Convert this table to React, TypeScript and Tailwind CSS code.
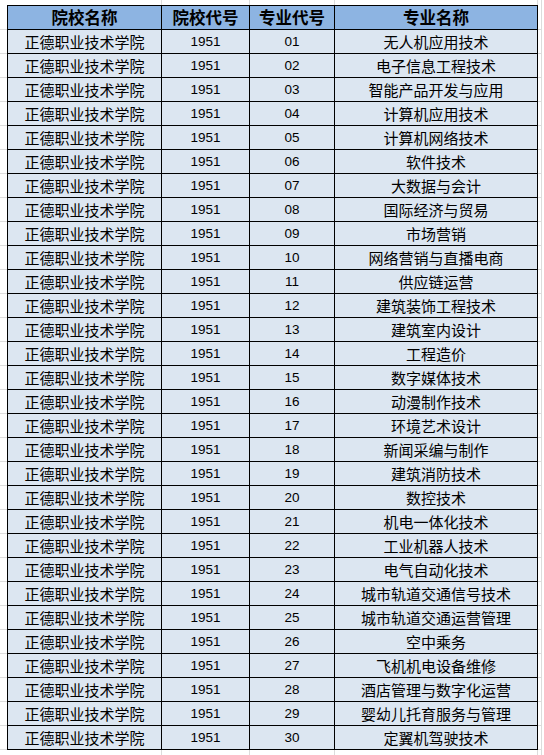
import React from "react";

const majors = [
  "无人机应用技术",
  "电子信息工程技术",
  "智能产品开发与应用",
  "计算机应用技术",
  "计算机网络技术",
  "软件技术",
  "大数据与会计",
  "国际经济与贸易",
  "市场营销",
  "网络营销与直播电商",
  "供应链运营",
  "建筑装饰工程技术",
  "建筑室内设计",
  "工程造价",
  "数字媒体技术",
  "动漫制作技术",
  "环境艺术设计",
  "新闻采编与制作",
  "建筑消防技术",
  "数控技术",
  "机电一体化技术",
  "工业机器人技术",
  "电气自动化技术",
  "城市轨道交通信号技术",
  "城市轨道交通运营管理",
  "空中乘务",
  "飞机机电设备维修",
  "酒店管理与数字化运营",
  "婴幼儿托育服务与管理",
  "定翼机驾驶技术",
];

const cjk = "font-['Noto_Sans_CJK_SC',sans-serif]";
const num = "font-['Liberation_Sans','Noto_Sans_CJK_SC',sans-serif]";

function Strip() {
  return (
    <div className="flex h-[5px]">
      <div className="w-[8px] shrink-0" />
      <div className="w-[154px] shrink-0 border-r border-[#dcdcdc]" />
      <div className="w-[88px] shrink-0 border-r border-[#dcdcdc]" />
      <div className="w-[85px] shrink-0 border-r border-[#dcdcdc]" />
      <div className="w-[203px] shrink-0 border-r border-[#dcdcdc]" />
      <div className="w-[4px] shrink-0 border-r border-[#dcdcdc]" />
    </div>
  );
}

function SideLines({ right }: { right?: boolean }) {
  return (
    <div
      className={
        right
          ? "w-[4px] shrink-0 flex flex-col border-r border-[#dcdcdc]"
          : "w-[7px] shrink-0 flex flex-col"
      }
    >
      <div className="h-[1px]" />
      {Array.from({ length: 31 }).map((_, i) => (
        <div key={i} className="h-[24px] border-b border-[#dcdcdc]" />
      ))}
    </div>
  );
}

export default function App() {
  return (
    <div className="w-[544px] h-[755px] bg-white overflow-hidden text-black">
      <Strip />
      <div className="flex">
        <SideLines />
        <div className="flex flex-col border-t border-l border-black">
          <div className={`flex bg-[#8db4e2] font-bold text-[16.5px] ${cjk}`}>
            <div className="w-[154px] h-[24px] border-r border-b border-black flex items-center justify-center leading-none">
              院校名称
            </div>
            <div className="w-[88px] h-[24px] border-r border-b border-black flex items-center justify-center leading-none">
              院校代号
            </div>
            <div className="w-[85px] h-[24px] border-r border-b border-black flex items-center justify-center leading-none">
              专业代号
            </div>
            <div className="w-[203px] h-[24px] border-r border-b border-black flex items-center justify-center leading-none">
              专业名称
            </div>
          </div>
          {majors.map((m, i) => (
            <div key={i} className="flex bg-[#dce6f1]">
              <div
                className={`w-[154px] h-[24px] border-r border-b border-black flex items-center justify-center leading-none text-[15px] ${cjk}`}
              >
                正德职业技术学院
              </div>
              <div
                className={`w-[88px] h-[24px] border-r border-b border-black flex items-center justify-center leading-none text-[13.5px] ${num}`}
              >
                1951
              </div>
              <div
                className={`w-[85px] h-[24px] border-r border-b border-black flex items-center justify-center leading-none text-[13.5px] ${num}`}
              >
                {String(i + 1).padStart(2, "0")}
              </div>
              <div
                className={`w-[203px] h-[24px] border-r border-b border-black flex items-center justify-center leading-none text-[15px] ${cjk}`}
              >
                {m}
              </div>
            </div>
          ))}
        </div>
        <SideLines right />
      </div>
      <Strip />
    </div>
  );
}
